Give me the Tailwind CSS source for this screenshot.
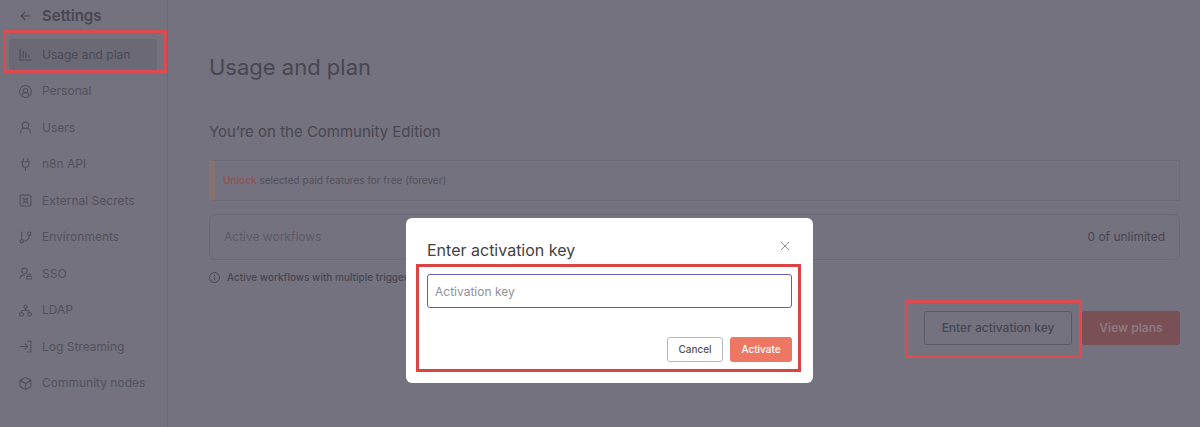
<!DOCTYPE html>
<html lang="en">
<head>
    <meta charset="UTF-8">
    <meta name="viewport" content="width=device-width, initial-scale=1.0">
    <title>Settings - Usage and plan</title>
    <script src="https://cdn.jsdelivr.net/npm/@tailwindcss/browser@4"></script>
</head>
<body class="bg-[#74727e] font-['Inter',sans-serif] text-[#484652]">

    <div class="flex min-h-screen">
        <!-- Sidebar -->
        <aside class="flex w-[168px] shrink-0 flex-col border-r border-[#6c6a76] pt-[6px] pr-[10px] pb-[28px] pl-[9px]">
            <a href="#" class="mb-[13px] flex h-5 items-center gap-[10px] pl-[10px] text-[15px] font-semibold">
                <svg class="size-[13px]" viewBox="0 0 24 24" fill="none" stroke="currentColor" stroke-width="2" stroke-linecap="round" stroke-linejoin="round"><path d="m11 4-7 7 7 7M4 11h16"/></svg>
                Settings
            </a>
            <nav class="flex grow flex-col justify-between text-xs text-[#53515d]">
                <a href="#" class="relative flex h-[31px] items-center gap-[10px] rounded-sm bg-[#6a6975] pl-[10px] text-[#4b4955]">
                    <svg class="size-[13px]" viewBox="0 0 24 24" fill="none" stroke="currentColor" stroke-width="2" stroke-linecap="round" stroke-linejoin="round"><path d="M2 2v20h21M8 17V6M13 17v-7M18 17v-3"/></svg>
                    Usage and plan
                    <span class="pointer-events-none absolute -top-[9px] -right-[10px] -bottom-[3px] -left-[6px] border-3 border-[#dc4b50]"></span>
                </a>
                <a href="#" class="flex h-[31px] items-center gap-[10px] pl-[10px]">
                    <svg class="size-[13px]" viewBox="0 0 24 24" fill="none" stroke="currentColor" stroke-width="2" stroke-linecap="round" stroke-linejoin="round"><circle cx="12" cy="12" r="11"/><circle cx="12" cy="10" r="4"/><path d="M6 20v-1a5 5 0 0 1 5-5h2a5 5 0 0 1 5 5v1"/></svg>
                    Personal
                </a>
                <a href="#" class="flex h-[31px] items-center gap-[10px] pl-[10px]">
                    <svg class="size-[13px]" viewBox="0 0 24 24" fill="none" stroke="currentColor" stroke-width="2" stroke-linecap="round" stroke-linejoin="round"><circle cx="12" cy="8" r="6"/><path d="M3 22c0-5 3-8 6-9M21 22c0-5-3-8-6-9"/></svg>
                    Users
                </a>
                <a href="#" class="flex h-[31px] items-center gap-[10px] pl-[10px]">
                    <svg class="size-[13px]" viewBox="0 0 24 24" fill="none" stroke="currentColor" stroke-width="2" stroke-linecap="round" stroke-linejoin="round"><path d="M12 23v-6M8 7V1M16 7V1M4 7h16M6 7v5a5 5 0 0 0 5 5h2a5 5 0 0 0 5-5V7"/></svg>
                    n8n API
                </a>
                <a href="#" class="flex h-[31px] items-center gap-[10px] pl-[10px]">
                    <svg class="size-[13px]" viewBox="0 0 24 24" fill="none" stroke="currentColor" stroke-width="2" stroke-linecap="round" stroke-linejoin="round"><rect x="2" y="2" width="20" height="20" rx="2"/><circle cx="12" cy="12" r="3"/><path d="m7 7 3 3M14 14l3 3M17 7l-3 3M10 14l-3 3"/></svg>
                    External Secrets
                </a>
                <a href="#" class="flex h-[31px] items-center gap-[10px] pl-[10px]">
                    <svg class="size-[13px]" viewBox="0 0 24 24" fill="none" stroke="currentColor" stroke-width="2" stroke-linecap="round" stroke-linejoin="round"><path d="M5 2v14M19 8a11 11 0 0 1-11 11"/><circle cx="19" cy="5" r="3"/><circle cx="5" cy="19" r="3"/></svg>
                    Environments
                </a>
                <a href="#" class="flex h-[31px] items-center gap-[10px] pl-[10px]">
                    <svg class="size-[13px]" viewBox="0 0 24 24" fill="none" stroke="currentColor" stroke-width="2" stroke-linecap="round" stroke-linejoin="round"><circle cx="10" cy="7" r="5"/><path d="M2 21c0-4 3-6 8-6M16 17v-2a2 2 0 0 1 5 0v2"/><rect x="14" y="17" width="9" height="5" rx="1"/></svg>
                    SSO
                </a>
                <a href="#" class="flex h-[31px] items-center gap-[10px] pl-[10px]">
                    <svg class="size-[13px]" viewBox="0 0 24 24" fill="none" stroke="currentColor" stroke-width="2" stroke-linecap="round" stroke-linejoin="round"><circle cx="12" cy="5" r="3"/><rect x="1" y="16" width="7" height="6" rx="2"/><rect x="16" y="16" width="7" height="6" rx="2"/><path d="M12 8v4M5 16v-2a2 2 0 0 1 2-2h10a2 2 0 0 1 2 2v2"/></svg>
                    LDAP
                </a>
                <a href="#" class="flex h-[31px] items-center gap-[10px] pl-[10px]">
                    <svg class="size-[13px]" viewBox="0 0 24 24" fill="none" stroke="currentColor" stroke-width="2" stroke-linecap="round" stroke-linejoin="round"><path d="M16 2h6v20h-6M11 7l5 5-5 5M16 12H2"/></svg>
                    Log Streaming
                </a>
                <a href="#" class="flex h-[31px] items-center gap-[10px] pl-[10px]">
                    <svg class="size-[13px]" viewBox="0 0 24 24" fill="none" stroke="currentColor" stroke-width="2" stroke-linecap="round" stroke-linejoin="round"><path d="m12 1 10 5v12l-10 5-10-5V6zM2 6l10 6 10-6M12 12v11"/></svg>
                    Community nodes
                </a>
            </nav>
        </aside>

        <!-- Page content -->
        <main class="grow pt-[51px] pr-5 pl-[41px]">
            <h1 class="text-[22px] leading-8">Usage and plan</h1>
            <h2 class="mt-[39px] text-[15px] leading-5">You’re on the Community Edition</h2>

            <div class="mt-[18px] flex h-[41px] items-center border border-l-6 border-[#6d6b77] border-l-[#86736f] pl-2 text-[10px] text-[#53515d]">
                <p><a href="#" class="font-semibold text-[#8c5657]">Unlock</a> selected paid features for free (forever)</p>
            </div>

            <div class="mt-[13px] flex h-[46px] items-center justify-between rounded-md border border-[#6b6975] px-[14px] text-xs">
                <span class="text-[#5c5a66]">Active workflows</span>
                <span>0 of unlimited</span>
            </div>

            <p class="mt-[9px] flex items-center gap-[7px] text-[10px] leading-4 font-medium">
                <svg class="size-[11px]" viewBox="0 0 24 24" fill="none" stroke="currentColor" stroke-width="2" stroke-linecap="round"><circle cx="12" cy="12" r="11"/><path d="M12 12v5M12 7v1"/></svg>
                Active workflows with multiple triggers count only once
            </p>

            <div class="mt-[26px] flex justify-end gap-[10px] text-xs font-medium">
                <div class="relative">
                    <button type="button" class="h-[34px] w-[148px] rounded-[3px] border border-[#5a5864]">Enter activation key</button>
                    <span class="pointer-events-none absolute -top-[11px] -right-[10px] -bottom-[13px] -left-[19px] border-3 border-[#dc4b50]"></span>
                </div>
                <button type="button" class="h-[34px] w-[98px] rounded-[3px] bg-[#7a5057] font-semibold text-[#8d7980]">View plans</button>
            </div>
        </main>
    </div>

    <!-- Activation dialog -->
    <div class="fixed inset-0 flex items-start justify-center pt-[218px] pl-[19px]">
        <div role="dialog" aria-labelledby="dialogTitle" class="w-[407px] rounded-md bg-white px-[21px] pt-[21px] pb-[21px]">
            <div class="flex items-center justify-between">
                <h2 id="dialogTitle" class="text-base leading-[22px] text-[#414244]">Enter activation key</h2>
                <button type="button" aria-label="Close" class="mb-2 text-[#909298]">
                    <svg class="size-[14px]" viewBox="0 0 14 14" fill="none" stroke="currentColor" stroke-width="1"><path d="m3 3 8 8M11 3l-8 8"/></svg>
                </button>
            </div>
            <form class="relative mt-[13px]">
                <input type="text" aria-label="Activation key" placeholder="Activation key" class="block h-[34px] w-full rounded-[3px] border border-[#6b5bb5] px-[7px] text-xs text-[#414244] outline-none placeholder:text-[#909298]">
                <div class="mt-[29px] flex justify-end gap-[7px] text-[10px] font-medium">
                    <button type="button" class="h-[25px] w-14 rounded-[3px] border border-[#b5b6bd] text-[#525356]">Cancel</button>
                    <button type="submit" class="h-[25px] w-[62px] rounded-[3px] bg-[#ee7764] text-white">Activate</button>
                </div>
                <span class="pointer-events-none absolute -top-[10px] -right-[9px] -bottom-[10px] -left-[11px] border-3 border-[#dc4444]"></span>
            </form>
        </div>
    </div>

</body>
</html>
